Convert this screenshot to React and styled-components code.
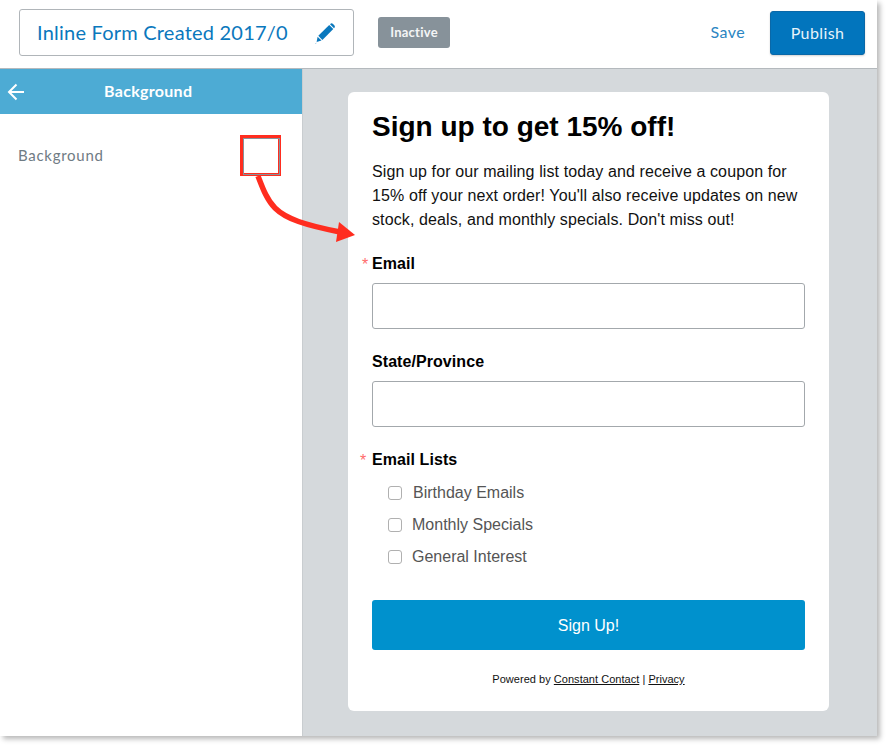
import React from "react";
import styled, { createGlobalStyle } from "styled-components";

const GlobalStyle = createGlobalStyle`
  html, body {
    margin: 0;
    padding: 0;
    background: #ffffff;
  }
  * {
    box-sizing: border-box;
  }
`;

const Page = styled.div`
  width: 887px;
  height: 746px;
  overflow: hidden;
  position: relative;
`;

const Frame = styled.div`
  width: 877px;
  height: 736px;
  display: flex;
  flex-direction: column;
  background: #ffffff;
  box-shadow: 3px 3px 5px rgba(0, 0, 0, 0.28);
`;

const TopBar = styled.header`
  height: 69px;
  flex: none;
  display: flex;
  align-items: flex-start;
  padding-left: 19px;
  border-bottom: 1px solid #b4b9bd;
  font-family: Lato, "Open Sans", sans-serif;
`;

const TitleBox = styled.div`
  width: 335px;
  height: 47px;
  margin-top: 9px;
  display: flex;
  align-items: center;
  justify-content: space-between;
  padding: 0 17px;
  border: 1px solid #b0b5b9;
  border-radius: 3px;
`;

const TitleText = styled.span`
  width: 252px;
  padding-bottom: 2px;
  overflow: hidden;
  white-space: nowrap;
  font-size: 20px;
  letter-spacing: 0.22px;
  color: #0a78bd;
`;

const Badge = styled.span`
  width: 72px;
  height: 31px;
  margin: 17px 0 0 24px;
  padding-bottom: 2px;
  display: flex;
  align-items: center;
  justify-content: center;
  background: #87929a;
  border-radius: 3px;
  color: #f4f5f6;
  font-size: 13px;
  font-weight: 700;
  letter-spacing: 0.25px;
`;

const Actions = styled.div`
  margin-left: auto;
  margin-right: 12px;
  margin-top: 11px;
  display: flex;
  align-items: center;
  gap: 25px;
`;

const SaveLink = styled.span`
  padding-bottom: 3px;
  font-size: 16px;
  letter-spacing: 0.4px;
  color: #2a85c2;
`;

const PublishButton = styled.button`
  width: 95px;
  height: 44px;
  padding-bottom: 2px;
  border: 1px solid #0a68a8;
  border-radius: 3px;
  background: #0275bd;
  color: #e8f3fa;
  font-family: inherit;
  font-size: 16px;
  letter-spacing: 0.4px;
  box-shadow: 0 1px 2px rgba(0, 0, 0, 0.18);
`;

const Body = styled.div`
  flex: 1;
  min-height: 0;
  display: flex;
`;

const Sidebar = styled.aside`
  width: 303px;
  flex: none;
  background: #ffffff;
  border-right: 1px solid #c9cdd0;
  font-family: Lato, "Open Sans", sans-serif;
`;

const SidebarHeader = styled.div`
  height: 45px;
  display: flex;
  align-items: center;
  padding-left: 7px;
  background: #4dabd4;
  color: #ffffff;
`;

const SidebarTitle = styled.span`
  margin-left: 79px;
  padding-bottom: 2px;
  font-size: 16px;
  font-weight: 700;
  letter-spacing: 0.3px;
`;

const SettingRow = styled.div`
  margin-top: 21px;
  height: 41px;
  display: flex;
  align-items: center;
  padding-left: 18px;
  color: #6f7b84;
  font-size: 15px;
  letter-spacing: 0.72px;
`;

const SettingLabel = styled.span`
  width: 222px;
  padding-bottom: 2px;
`;

const SwatchMark = styled.span`
  width: 41px;
  height: 41px;
  border: 3px solid #ff2d1f;
  background: #ffffff;
  &::after {
    content: "";
    display: block;
    width: 100%;
    height: 100%;
    border: 1px solid #87929a;
  }
`;

const Canvas = styled.main`
  flex: 1;
  background: #d5d9dc;
  padding: 23px 0 0 45px;
`;

const FormCard = styled.section`
  width: 481px;
  height: 619px;
  padding: 17px 24px 0;
  background: #ffffff;
  border-radius: 6px;
  color: #000000;
  font-family: "Liberation Sans", Arial, sans-serif;
`;

const Heading = styled.h1`
  margin: 0;
  font-size: 28px;
  line-height: 36px;
  font-weight: 700;
`;

const Intro = styled.p`
  margin: 15px 0 0;
  font-size: 16px;
  line-height: 24px;
  letter-spacing: 0.11px;
  color: #111111;
`;

const FieldLabel = styled.label`
  display: block;
  position: relative;
  margin-top: ${(p) => p.$top}px;
  font-size: 16px;
  line-height: 20px;
  letter-spacing: 0.07px;
  font-weight: 700;
`;

const Required = styled.span`
  position: absolute;
  left: ${(p) => p.$left}px;
  top: 2px;
  color: #ff6b6b;
  font-size: 16px;
  line-height: 18px;
  font-weight: 400;
`;

const TextInput = styled.div`
  height: 46px;
  margin-top: 9px;
  background: #ffffff;
  border: 1px solid #a3a8ac;
  border-radius: 3px;
`;

const CheckList = styled.div`
  margin-top: 7px;
  padding-left: 16px;
  display: flex;
  flex-direction: column;
`;

const CheckRow = styled.label`
  height: 32px;
  display: flex;
  align-items: center;
  gap: ${(p) => p.$gap}px;
  font-size: 16px;
  color: #555555;
`;

const CheckBox = styled.span`
  width: 14px;
  height: 14px;
  flex: none;
  border: 1px solid #b0b0b0;
  border-radius: 3px;
  background: #ffffff;
`;

const SubmitButton = styled.button`
  width: 100%;
  height: 50px;
  margin-top: 27px;
  padding-top: 2px;
  display: block;
  border: none;
  border-radius: 3px;
  background: #0091cd;
  color: #ffffff;
  font-family: inherit;
  font-size: 16px;
`;

const Footer = styled.p`
  margin: 22px 0 0;
  text-align: center;
  font-size: 11px;
  line-height: 14px;
  letter-spacing: 0.03px;
  color: #111111;
  a {
    color: inherit;
    text-decoration: underline;
  }
`;

const ArrowOverlay = styled.svg`
  position: absolute;
  left: 250px;
  top: 170px;
  width: 120px;
  height: 80px;
`;

const lists = [
  { name: "Birthday Emails", gap: 11 },
  { name: "Monthly Specials", gap: 10 },
  { name: "General Interest", gap: 10 },
];

function PencilIcon() {
  return (
    <svg width="22" height="22" viewBox="0 0 22 22" fill="#0a78bd">
      <path d="M15.2 2.9 L19.3 7 L8.4 17.9 L4.3 13.8 Z" />
      <path d="M16.3 1.9 C17.1 1.1 18.2 1.1 19 1.9 L20.3 3.2 C21.1 4 21.1 5.1 20.3 5.9 L20 6.2 L16 2.2 Z" />
      <path d="M3.6 14.7 L7.5 18.6 L2.6 20 Z" />
      <path d="M1 21.2 L3 20.7 L1.6 21.6 Z" />
    </svg>
  );
}

function BackArrow() {
  return (
    <svg width="18" height="18" viewBox="0 0 18 18" fill="none" stroke="#ffffff" strokeWidth="2">
      <path d="M17 9 H2" />
      <path d="M9.5 1.5 L2 9 L9.5 16.5" />
    </svg>
  );
}

export default function App() {
  return (
    <Page>
      <GlobalStyle />
      <Frame>
        <TopBar>
          <TitleBox>
            <TitleText>Inline Form Created 2017/05/</TitleText>
            <PencilIcon />
          </TitleBox>
          <Badge>Inactive</Badge>
          <Actions>
            <SaveLink>Save</SaveLink>
            <PublishButton>Publish</PublishButton>
          </Actions>
        </TopBar>
        <Body>
          <Sidebar>
            <SidebarHeader>
              <BackArrow />
              <SidebarTitle>Background</SidebarTitle>
            </SidebarHeader>
            <SettingRow>
              <SettingLabel>Background</SettingLabel>
              <SwatchMark />
            </SettingRow>
          </Sidebar>
          <Canvas>
            <FormCard>
              <Heading>Sign up to get 15% off!</Heading>
              <Intro>
                Sign up for our mailing list today and receive a coupon for
                <br />
                15% off your next order! You'll also receive updates on new
                <br />
                stock, deals, and monthly specials. Don't miss out!
              </Intro>
              <FieldLabel $top={22}>
                <Required $left={-10}>*</Required>
                Email
              </FieldLabel>
              <TextInput />
              <FieldLabel $top={23}>State/Province</FieldLabel>
              <TextInput />
              <FieldLabel $top={23}>
                <Required $left={-12}>*</Required>
                Email Lists
              </FieldLabel>
              <CheckList>
                {lists.map((item) => (
                  <CheckRow key={item.name} $gap={item.gap}>
                    <CheckBox />
                    {item.name}
                  </CheckRow>
                ))}
              </CheckList>
              <SubmitButton>Sign Up!</SubmitButton>
              <Footer>
                Powered by <a>Constant Contact</a> | <a>Privacy</a>
              </Footer>
            </FormCard>
          </Canvas>
        </Body>
      </Frame>
      <ArrowOverlay viewBox="0 0 120 80">
        <path d="M8 6 C13 19 17 30 25 38 C36 49 55 55 90 62" fill="none" stroke="#ff2d1f" strokeWidth="5.5" />
        <path d="M89 52 L105 65 L86 72 Z" fill="#ff2d1f" />
      </ArrowOverlay>
    </Page>
  );
}
